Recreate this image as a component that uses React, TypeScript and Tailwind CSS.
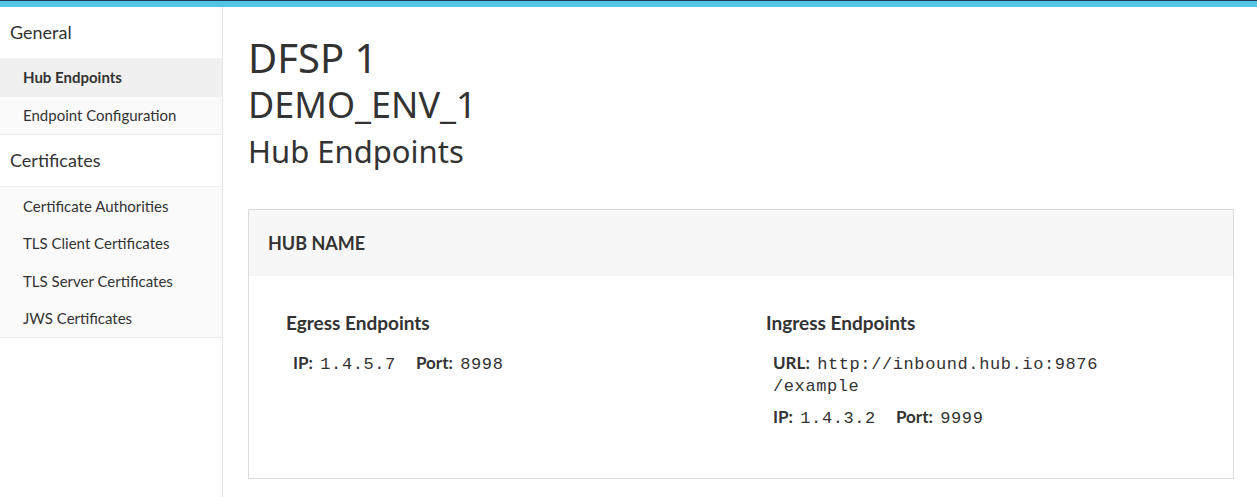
export default function App() {
  const general = ["Hub Endpoints", "Endpoint Configuration"];
  const certs = [
    "Certificate Authorities",
    "TLS Client Certificates",
    "TLS Server Certificates",
    "JWS Certificates",
  ];

  const mono = "ml-[3px] font-['Liberation_Mono',monospace] text-[17px] tracking-[0.6px]";

  return (
    <div className="w-[1257px] h-[497px] overflow-hidden bg-white text-[#333] flex flex-col">
      <div className="h-px bg-[#1b3c54]" />
      <div className="h-[6px] bg-[#53c6e6]" />
      <div className="flex flex-1">
        {/* sidebar */}
        <div className="w-[223px] border-r border-[#e6e6e6] font-['Lato',sans-serif]">
          <div className="h-[51px] flex items-center px-[10px] text-[18px]">General</div>
          <div className="h-[39px] flex items-center pl-[23px] text-[15px] font-bold bg-[#f0f0f0]">
            {general[0]}
          </div>
          <div className="h-[38px] flex items-center pl-[23px] text-[15px] bg-[#fafafa] border-b border-[#eaeaea]">
            {general[1]}
          </div>
          <div className="h-[52px] flex items-center px-[10px] text-[18px] border-b border-[#eeeeee]">
            Certificates
          </div>
          <div className="bg-[#fafafa] border-b border-[#eaeaea]">
            {certs.map((c) => (
              <div key={c} className="h-[37.5px] flex items-center pl-[23px] text-[15px]">
                {c}
              </div>
            ))}
          </div>
        </div>

        {/* main */}
        <div className="flex-1 pl-[25px] pr-[23px]">
          <div className="font-['Noto_Sans',sans-serif] text-[#333]">
            <div className="text-[40px] leading-[48px] mt-[27px]">DFSP 1</div>
            <div className="text-[36px] leading-[42px] mt-[2px]">DEMO_ENV_1</div>
            <div className="text-[31px] leading-[38px] mt-[6px]">Hub Endpoints</div>
          </div>

          <div className="mt-[39px] border border-[#dddddd] h-[270px] font-['Lato',sans-serif]">
            <div className="h-[66px] bg-[#f7f7f7] flex items-center px-[19px] text-[18px] font-bold">
              HUB NAME
            </div>
            <div className="grid grid-cols-[480px_1fr] pl-[37px] pt-[35px]">
              <div>
                <div className="text-[19px] font-bold leading-[24px]">Egress Endpoints</div>
                <div className="mt-[17px] pl-[7px] text-[17px] leading-[22px] flex gap-[20px]">
                  <span>
                    <b>IP:</b> <span className={mono}>1.4.5.7</span>
                  </span>
                  <span>
                    <b>Port:</b> <span className={mono}>8998</span>
                  </span>
                </div>
              </div>
              <div>
                <div className="text-[19px] font-bold leading-[24px]">Ingress Endpoints</div>
                <div className="mt-[18px] pl-[7px] text-[17px] leading-[20px]">
                  <b>URL:</b>{" "}
                  <span className={mono}>
                    http://inbound.hub.io:9876
                    <br />
                    /example
                  </span>
                </div>
                <div className="mt-[9px] pl-[7px] text-[17px] leading-[22px] flex gap-[20px]">
                  <span>
                    <b>IP:</b> <span className={mono}>1.4.3.2</span>
                  </span>
                  <span>
                    <b>Port:</b> <span className={mono}>9999</span>
                  </span>
                </div>
              </div>
            </div>
          </div>
        </div>
      </div>
    </div>
  );
}
